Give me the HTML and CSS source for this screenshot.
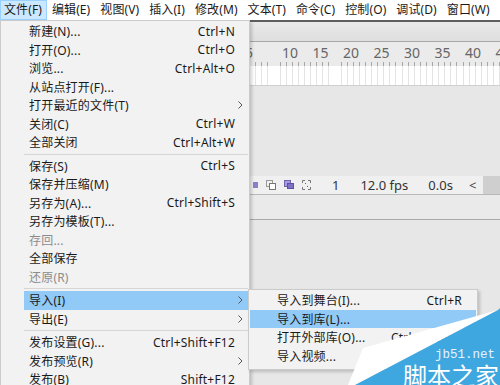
FILE: index.html
```html
<!DOCTYPE html>
<html lang="zh-CN">
<head>
  <meta charset="UTF-8" />
  <title>Flash 文件菜单</title>
  <link rel="stylesheet" href="styles.css">
</head>
<body>

  <div class="app">
    <!-- 菜单栏 -->
    <div class="menubar">
      <span class="mb-item active">文件(F)</span>
      <span class="mb-item">编辑(E)</span>
      <span class="mb-item">视图(V)</span>
      <span class="mb-item">插入(I)</span>
      <span class="mb-item">修改(M)</span>
      <span class="mb-item">文本(T)</span>
      <span class="mb-item">命令(C)</span>
      <span class="mb-item">控制(O)</span>
      <span class="mb-item">调试(D)</span>
      <span class="mb-item">窗口(W)</span>
    </div>

    <!-- 工作区（时间轴） -->
    <div class="workspace">
      <div class="topbar"></div>
      <div class="ruler">
        <span class="num first">5</span>
        <span class="num">10</span>
        <span class="num">15</span>
        <span class="num">20</span>
        <span class="num">25</span>
        <span class="num">30</span>
        <span class="num">35</span>
        <span class="num">40</span>
        <span class="num">45</span>
      </div>
      <div class="frames"></div>
      <div class="layers"></div>
      <div class="tl-toolbar">
        <svg class="tl-icon" width="8" height="12" viewBox="0 0 8 12"><rect x="3" y="3" width="5" height="6" fill="#8a80c8"/></svg>
        <svg class="tl-icon" width="10" height="12" viewBox="0 0 10 12"><rect x="0.5" y="1.5" width="6" height="6" fill="none" stroke="#999"/><rect x="3.5" y="4.5" width="6" height="6" fill="#fff" stroke="#777"/></svg>
        <svg class="tl-icon" width="10" height="12" viewBox="0 0 10 12"><rect x="0.5" y="1.5" width="6" height="6" fill="#a59ddb" stroke="#6e64b4"/><rect x="3.5" y="4.5" width="6" height="5" fill="#7d72c4" stroke="#5a50a6"/></svg>
        <svg class="tl-icon" width="9" height="12" viewBox="0 0 9 12"><path d="M0.5 4V1.5H3M6 1.5H8.5V4M8.5 8V10.5H6M3 10.5H0.5V8" fill="none" stroke="#777"/><rect x="3" y="4" width="1" height="1" fill="#666"/><rect x="5" y="7" width="1" height="1" fill="#666"/></svg>
        <span class="tl-frame">1</span>
        <span class="tl-fps">12.0 fps</span>
        <span class="tl-time">0.0s</span>
        <span class="tl-left">&lt;</span>
        <span class="tl-scroll"></span>
      </div>
      <div class="panel-strip"></div>
      <div class="rest"></div>
    </div>

    <!-- 文件菜单 -->
    <div class="menu main-menu">
      <div class="mi"><span class="lbl">新建(N)...</span><span class="key">Ctrl+N</span></div>
      <div class="mi"><span class="lbl">打开(O)...</span><span class="key">Ctrl+O</span></div>
      <div class="mi"><span class="lbl">浏览...</span><span class="key">Ctrl+Alt+O</span></div>
      <div class="mi"><span class="lbl">从站点打开(F)...</span></div>
      <div class="mi"><span class="lbl">打开最近的文件(T)</span><svg class="arr" width="5" height="8" viewBox="0 0 5 8"><path d="M0.5 0.5L4 4L0.5 7.5" fill="none" stroke="#555"/></svg></div>
      <div class="mi"><span class="lbl">关闭(C)</span><span class="key">Ctrl+W</span></div>
      <div class="mi"><span class="lbl">全部关闭</span><span class="key">Ctrl+Alt+W</span></div>
      <div class="sep"></div>
      <div class="mi"><span class="lbl">保存(S)</span><span class="key">Ctrl+S</span></div>
      <div class="mi"><span class="lbl">保存并压缩(M)</span></div>
      <div class="mi"><span class="lbl">另存为(A)...</span><span class="key">Ctrl+Shift+S</span></div>
      <div class="mi"><span class="lbl">另存为模板(T)...</span></div>
      <div class="mi disabled"><span class="lbl">存回...</span></div>
      <div class="mi"><span class="lbl">全部保存</span></div>
      <div class="mi disabled"><span class="lbl">还原(R)</span></div>
      <div class="sep"></div>
      <div class="mi hl"><span class="lbl">导入(I)</span><svg class="arr" width="5" height="8" viewBox="0 0 5 8"><path d="M0.5 0.5L4 4L0.5 7.5" fill="none" stroke="#555"/></svg></div>
      <div class="mi"><span class="lbl">导出(E)</span><svg class="arr" width="5" height="8" viewBox="0 0 5 8"><path d="M0.5 0.5L4 4L0.5 7.5" fill="none" stroke="#555"/></svg></div>
      <div class="sep"></div>
      <div class="mi"><span class="lbl">发布设置(G)...</span><span class="key">Ctrl+Shift+F12</span></div>
      <div class="mi"><span class="lbl">发布预览(R)</span><svg class="arr" width="5" height="8" viewBox="0 0 5 8"><path d="M0.5 0.5L4 4L0.5 7.5" fill="none" stroke="#555"/></svg></div>
      <div class="mi"><span class="lbl">发布(B)</span><span class="key">Shift+F12</span></div>
    </div>

    <!-- 导入子菜单 -->
    <div class="menu sub-menu">
      <div class="mi"><span class="lbl">导入到舞台(I)...</span><span class="key">Ctrl+R</span></div>
      <div class="mi hl"><span class="lbl">导入到库(L)...</span></div>
      <div class="mi"><span class="lbl">打开外部库(O)...</span><span class="key">Ctrl+Shift+O</span></div>
      <div class="mi"><span class="lbl">导入视频...</span></div>
    </div>

    <!-- 水印 -->
    <div class="watermark">
      <svg class="wm-shape" width="160" height="80" viewBox="0 0 160 80">
        <polygon points="23,43 158,5 15,80 8,80" fill="#ffffff"/>
        <polygon points="158,5 160,3 160,80 15,80" fill="#3ea7df"/>
      </svg>
      <div class="wm-text">
        <span class="wm-url">jb51.net</span>
        <span class="wm-name">脚本之家</span>
      </div>
    </div>
  </div>

</body>
</html>
```

FILE: styles.css
```css
/* 基础 */
* {
  box-sizing: border-box;
}
body {
  margin: 0;
  background: #e7e7e7;
  font-family: "Noto Sans", "Noto Sans CJK SC", sans-serif;
  font-size: 12px;
  color: #1a1a1a;
}

.app {
  position: relative;
  width: 500px;
  height: 385px;
  overflow: hidden;
  display: flex;
  flex-direction: column;
}

/* 菜单栏 */
.menubar {
  display: flex;
  height: 20px;
  background: #fff;
  white-space: nowrap;
  letter-spacing: 0.1px;
}
.mb-item {
  padding: 0 4px;
  border: 1px solid transparent;
  line-height: 18px;
}
.mb-item.active {
  background: #cce8ff;
  border-color: #99d1ff;
  padding-left: 3px;
}

/* 工作区 */
.workspace {
  flex: 1;
  display: flex;
  flex-direction: column;
  border-top: 2px solid #5e5e5e;
}
.topbar {
  height: 20px;
  background: linear-gradient(#e9e9e9, #dedede);
  border-bottom: 1px solid #a8a8a8;
}
.ruler {
  height: 24px;
  display: flex;
  align-items: flex-start;
  padding: 4px 0 0 245px;
  background:
    repeating-linear-gradient(to right, transparent 0, transparent 5.1px, #a8a8a8 5.1px, #a8a8a8 6.1px) 0 20px / 100% 4px no-repeat,
    #ebebeb;
  font-size: 14px;
  line-height: 14px;
  color: #666;
}
.num {
  width: 30.5px;
  flex: none;
}
.num.first {
  width: 37px;
}
.frames {
  height: 20px;
  background:
    repeating-linear-gradient(to right, #fff 0, #fff 5.1px, #e4e4e4 5.1px, #e4e4e4 6.1px);
  border-bottom: 1px solid #d0d0d0;
}
.layers {
  height: 90px;
  background: #e7e7e7;
}

/* 时间轴工具栏 */
.tl-toolbar {
  height: 19px;
  display: flex;
  align-items: center;
  padding-left: 250px;
  background: #f0f0f0;
  border-bottom: 1px solid #b9b9b9;
  font-size: 13px;
  color: #333;
  white-space: nowrap;
}
.tl-icon {
  flex: none;
  margin-right: 8px;
}
.tl-frame {
  margin-left: 13px;
}
.tl-fps {
  margin-left: 21px;
}
.tl-time {
  margin-left: 20px;
}
.tl-left {
  margin-left: 16px;
  color: #444;
}
.tl-scroll {
  flex: 1;
  align-self: stretch;
  margin-left: 7px;
  background: #cfcfcf;
}
.panel-strip {
  height: 25px;
  background: #eaeaea;
  border-bottom: 1px solid #a9a9a9;
}
.rest {
  flex: 1;
  background: #e7e7e7;
}

/* 下拉菜单 */
.menu {
  position: absolute;
  background: #f2f2f2;
  border: 1px solid #cbcbcb;
  box-shadow: 2px 2px 3px rgba(0, 0, 0, 0.18);
  letter-spacing: 0.2px;
  white-space: nowrap;
}
.main-menu {
  left: 0;
  top: 20px;
  width: 250px;
  padding: 1px 0 4px;
}
.sub-menu {
  left: 248px;
  top: 289px;
  width: 230px;
  padding: 1px 0 4px;
}
.mi {
  display: flex;
  align-items: center;
  height: 18.5px;
  margin: 0 1px 0 23px;
  padding: 0 13px 0 5px;
}
.sub-menu .mi {
  margin: 0 1px;
  padding: 0 14px 0 27px;
}
.mi .lbl {
  flex: 1;
}
.mi.hl {
  background: #91c9f7;
}
.mi.disabled {
  color: #8c8c8c;
}
.arr {
  margin-right: -8px;
}
.sep {
  height: 1px;
  margin: 2px 1px 2px 23px;
  background: #d6d6d6;
}

/* 水印 */
.watermark {
  position: absolute;
  right: 0;
  bottom: 0;
  width: 160px;
  height: 80px;
}
.wm-shape {
  display: block;
}
.wm-text {
  position: absolute;
  right: 0;
  bottom: 0;
  display: flex;
  flex-direction: column;
  align-items: flex-end;
}
.wm-url {
  font-family: "Liberation Mono", monospace;
  font-size: 12.5px;
  line-height: 14px;
  color: #e4f3ff;
  margin-right: 5px;
}
.wm-name {
  font-family: "Noto Sans CJK SC", sans-serif;
  font-size: 24px;
  line-height: 26px;
  color: #fff;
  margin-right: 1px;
  margin-bottom: -3px;
}
```
